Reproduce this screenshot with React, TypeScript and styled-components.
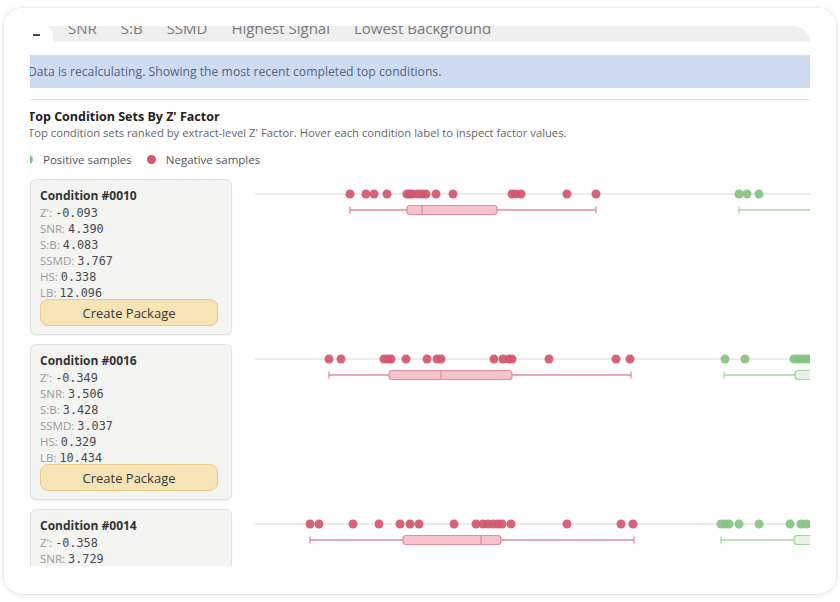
import React from "react";
import styled, { createGlobalStyle } from "styled-components";

const GlobalStyle = createGlobalStyle`
  html, body { margin: 0; padding: 0; background: #ffffff; }
  body { font-family: "Open Sans", "Noto Sans", sans-serif; }
  * { box-sizing: border-box; }
`;

const Page = styled.div`
  padding: 8px 4px;
  width: 840px;
  height: 602px;
`;

const Shell = styled.div`
  width: 832px;
  height: 586px;
  background: #ffffff;
  border-radius: 18px;
  box-shadow: 0 1px 6px rgba(0, 0, 0, 0.1), 0 0 0 1px rgba(0, 0, 0, 0.03);
  padding: 18px 26px 28px 26px;
`;

const Viewport = styled.div`
  width: 780px;
  height: 540px;
  overflow: hidden;
`;

const Content = styled.div`
  width: 792px;
  margin-left: -12px;
`;

const TabBar = styled.div`
  display: flex;
  align-items: flex-end;
  height: 16px;
  background: #efefef;
  border-top-right-radius: 17px 16px;
`;

const Tab = styled.div`
  height: 27px;
  line-height: 26px;
  padding: 0 12px;
  font-size: 15px;
  color: #7a7a7a;
  white-space: nowrap;
  flex: 0 0 auto;
`;

const ActiveTab = styled.div`
  flex: 0 0 35px;
  height: 16px;
  margin-right: 3px;
  background: #ffffff;
  border-top-right-radius: 9px;
  display: flex;
  align-items: flex-end;
  padding: 0 0 6px 15px;
`;

const ActiveMark = styled.span`
  display: block;
  width: 7px;
  height: 2px;
  background: #444;
`;

const Alert = styled.div`
  margin-top: 13px;
  height: 33px;
  background: #cddcf1;
  color: #56657c;
  font-size: 12.2px;
  line-height: 33px;
  padding-left: 10px;
  white-space: nowrap;
`;

const Divider = styled.div`
  margin-top: 11px;
  height: 1px;
  background: #e3e3e3;
`;

const Section = styled.div`
  padding-left: 10px;
`;

const Title = styled.h2`
  margin: 9px 0 0 0;
  font-size: 12.5px;
  line-height: 16px;
  font-weight: 700;
  color: #222;
`;

const Subtitle = styled.p`
  margin: 1px 0 0 0;
  font-size: 11.25px;
  line-height: 14px;
  color: #666;
  white-space: nowrap;
`;

const Legend = styled.div`
  display: flex;
  align-items: center;
  margin-top: 12px;
  height: 14px;
  margin-left: -4px;
`;

const LegendItem = styled.div`
  display: flex;
  align-items: center;
  font-size: 11.5px;
  color: #555;
  margin-right: 15px;
`;

const Dot = styled.span<{ $color: string }>`
  display: inline-block;
  width: 9px;
  height: 9px;
  border-radius: 50%;
  background: ${(p) => p.$color};
  margin-right: 10px;
`;

const Rows = styled.div`
  margin-top: 13px;
  display: flex;
  flex-direction: column;
  gap: 9px;
`;

const Row = styled.div`
  display: flex;
  align-items: flex-start;
  gap: 23px;
  margin-left: 12px;
`;

const Card = styled.div`
  flex: 0 0 202px;
  background: #f4f4f2;
  border: 1px solid #e1e1df;
  border-radius: 6px;
  box-shadow: 0 1px 2px rgba(0, 0, 0, 0.06);
  padding: 9px 13px 8px 9px;
`;

const CardTitle = styled.div`
  font-size: 12px;
  line-height: 14px;
  font-weight: 700;
  color: #333;
`;

const Metric = styled.div`
  line-height: 16px;
  height: 16px;
  white-space: nowrap;
`;

const MetricLabel = styled.span`
  font-size: 11.5px;
  color: #9a9a9a;
  margin-right: 3px;
`;

const MetricValue = styled.span`
  font-family: "DejaVu Sans Mono", "Liberation Mono", monospace;
  font-size: 11.8px;
  color: #4a4a4a;
`;

const PackageButton = styled.button`
  display: block;
  width: 100%;
  height: 27px;
  background: #f7e4b6;
  border: 1px solid #e8cb86;
  border-radius: 8px;
  font-family: "Open Sans", "Noto Sans", sans-serif;
  font-size: 13px;
  color: #383838;
  cursor: pointer;
  padding: 0;
`;

const Chart = styled.svg`
  flex: 0 0 600px;
  display: block;
`;

type Box = { lo: number; q1: number; med: number; q3: number; hi: number };

type Condition = {
  id: string;
  z: string;
  snr: string;
  sb: string;
  ssmd: string;
  hs: string;
  lb: string;
  neg: number[];
  pos: number[];
  negBox: Box;
  posBox: Box;
};

const conditions: Condition[] = [
  {
    id: "0010",
    z: "-0.093",
    snr: "4.390",
    sb: "4.083",
    ssmd: "3.767",
    hs: "0.338",
    lb: "12.096",
    neg: [350, 366, 374, 387, 407, 410, 413, 418, 422, 426, 436, 453, 512, 516, 521, 567, 596],
    pos: [739, 747, 759, 830, 838],
    negBox: { lo: 350, q1: 407, med: 422, q3: 497, hi: 596 },
    posBox: { lo: 739, q1: 822, med: 830, q3: 845, hi: 850 },
  },
  {
    id: "0016",
    z: "-0.349",
    snr: "3.506",
    sb: "3.428",
    ssmd: "3.037",
    hs: "0.329",
    lb: "10.434",
    neg: [329, 341, 384, 388, 391, 406, 427, 437, 441, 494, 503, 509, 512, 549, 616, 630],
    pos: [725, 745, 794, 798, 802, 806, 810, 814],
    negBox: { lo: 329, q1: 389, med: 441, q3: 512, hi: 631 },
    posBox: { lo: 724, q1: 795, med: 812, q3: 826, hi: 835 },
  },
  {
    id: "0014",
    z: "-0.358",
    snr: "3.729",
    sb: "3.512",
    ssmd: "3.104",
    hs: "0.331",
    lb: "11.207",
    neg: [310, 319, 353, 379, 400, 410, 419, 454, 476, 483, 488, 493, 498, 502, 511, 567, 621, 633],
    pos: [721, 725, 729, 739, 759, 790, 801, 806, 812],
    negBox: { lo: 310, q1: 403, med: 481, q3: 501, hi: 634 },
    posBox: { lo: 721, q1: 794, med: 812, q3: 826, hi: 832 },
  },
];

const ORIGIN = 255;
const AXIS_Y = 15;
const BOX_Y = 31;

const palette = {
  neg: { dot: "#d4566e", fill: "#f6c3cc", stroke: "#e28c9c", line: "#e08a9b" },
  pos: { dot: "#84c381", fill: "#e4f3e2", stroke: "#a2d59e", line: "#a6d7a2" },
};

function BoxPlot({ box, tone }: { box: Box; tone: "neg" | "pos" }) {
  const c = palette[tone];
  const x = (v: number) => v - ORIGIN;
  return (
    <g>
      <line x1={x(box.lo)} x2={x(box.hi)} y1={BOX_Y} y2={BOX_Y} stroke={c.line} strokeWidth={1.3} />
      <line x1={x(box.lo)} x2={x(box.lo)} y1={BOX_Y - 3.5} y2={BOX_Y + 3.5} stroke={c.line} strokeWidth={1.3} />
      <line x1={x(box.hi)} x2={x(box.hi)} y1={BOX_Y - 3.5} y2={BOX_Y + 3.5} stroke={c.line} strokeWidth={1.3} />
      <rect
        x={x(box.q1)}
        y={BOX_Y - 4.5}
        width={box.q3 - box.q1}
        height={9}
        rx={3}
        fill={c.fill}
        stroke={c.stroke}
        strokeWidth={1.2}
      />
      <line x1={x(box.med)} x2={x(box.med)} y1={BOX_Y - 4.5} y2={BOX_Y + 4.5} stroke={c.stroke} strokeWidth={1.3} />
    </g>
  );
}

function Distribution({ c }: { c: Condition }) {
  return (
    <Chart width={600} height={44} viewBox="0 0 600 44">
      <line x1={0} x2={600} y1={AXIS_Y} y2={AXIS_Y} stroke="#e4e4e4" strokeWidth={1.5} />
      {c.neg.map((v, i) => (
        <circle key={`n${i}`} cx={v - ORIGIN} cy={AXIS_Y} r={4.5} fill={palette.neg.dot} fillOpacity={0.92} />
      ))}
      {c.pos.map((v, i) => (
        <circle key={`p${i}`} cx={v - ORIGIN} cy={AXIS_Y} r={4.5} fill={palette.pos.dot} fillOpacity={0.92} />
      ))}
      <BoxPlot box={c.negBox} tone="neg" />
      <BoxPlot box={c.posBox} tone="pos" />
    </Chart>
  );
}

function ConditionCard({ c }: { c: Condition }) {
  const metrics: [string, string][] = [
    ["Z':", c.z],
    ["SNR:", c.snr],
    ["S:B:", c.sb],
    ["SSMD:", c.ssmd],
    ["HS:", c.hs],
    ["LB:", c.lb],
  ];
  return (
    <Card>
      <CardTitle>Condition #{c.id}</CardTitle>
      {metrics.map(([label, value]) => (
        <Metric key={label}>
          <MetricLabel>{label}</MetricLabel>
          <MetricValue>{value}</MetricValue>
        </Metric>
      ))}
      <PackageButton type="button">Create Package</PackageButton>
    </Card>
  );
}

export default function App() {
  return (
    <>
      <GlobalStyle />
      <Page>
        <Shell>
          <Viewport>
            <Content>
              <TabBar>
                <ActiveTab>
                  <ActiveMark />
                </ActiveTab>
                <Tab>SNR</Tab>
                <Tab>S:B</Tab>
                <Tab>SSMD</Tab>
                <Tab>Highest Signal</Tab>
                <Tab>Lowest Background</Tab>
              </TabBar>
              <Alert>Data is recalculating. Showing the most recent completed top conditions.</Alert>
              <Divider />
              <Section>
                <Title>Top Condition Sets By Z' Factor</Title>
                <Subtitle>
                  Top condition sets ranked by extract-level Z' Factor. Hover each condition label to inspect factor
                  values.
                </Subtitle>
                <Legend>
                  <LegendItem>
                    <Dot $color={palette.pos.dot} />
                    Positive samples
                  </LegendItem>
                  <LegendItem>
                    <Dot $color={palette.neg.dot} />
                    Negative samples
                  </LegendItem>
                </Legend>
              </Section>
              <Rows>
                {conditions.map((c) => (
                  <Row key={c.id}>
                    <ConditionCard c={c} />
                    <Distribution c={c} />
                  </Row>
                ))}
              </Rows>
            </Content>
          </Viewport>
        </Shell>
      </Page>
    </>
  );
}
